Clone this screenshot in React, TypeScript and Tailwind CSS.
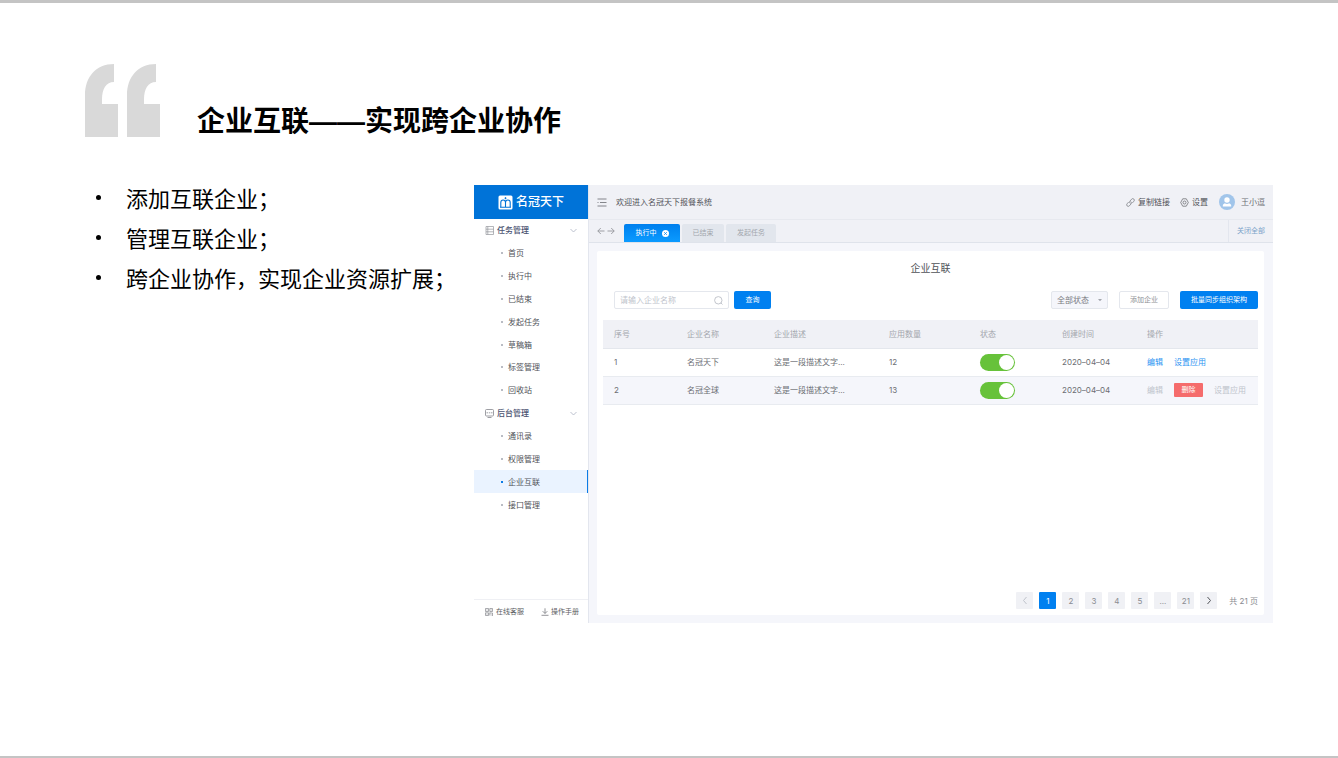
import type { ReactNode } from "react"

type NavItem = {
  label: string
  group?: "task" | "admin"
  active?: boolean
}

type Company = {
  id: number
  name: string
  desc: string
  apps: number
  created: string
  deletable?: boolean
}

const points = ["添加互联企业；", "管理互联企业；", "跨企业协作，实现企业资源扩展；"]

const navItems: NavItem[] = [
  { label: "任务管理", group: "task" },
  { label: "首页" },
  { label: "执行中" },
  { label: "已结束" },
  { label: "发起任务" },
  { label: "草稿箱" },
  { label: "标签管理" },
  { label: "回收站" },
  { label: "后台管理", group: "admin" },
  { label: "通讯录" },
  { label: "权限管理" },
  { label: "企业互联", active: true },
  { label: "接口管理" },
]

const companies: Company[] = [
  { id: 1, name: "名冠天下", desc: "这是一段描述文字...", apps: 12, created: "2020–04–04" },
  { id: 2, name: "名冠全球", desc: "这是一段描述文字...", apps: 13, created: "2020–04–04", deletable: true },
]

const columns = [
  { label: "序号", width: "w-[73px]" },
  { label: "企业名称", width: "w-[87px]" },
  { label: "企业描述", width: "w-[115px]" },
  { label: "应用数量", width: "w-[91px]" },
  { label: "状态", width: "w-[82px]" },
  { label: "创建时间", width: "w-[85px]" },
  { label: "操作", width: "w-[122px]" },
]

const pages = ["1", "2", "3", "4", "5", "...", "21"]

export default function App() {
  return (
    <div className="flex min-h-screen flex-col border-t-3 border-b-2 border-[#c4c4c4] bg-white text-black">
      <header className="flex items-start gap-[37px] pt-[61px] pl-[85px]">
        <QuoteMark />
        <h1 className="pt-[38px] font-['Liberation_Sans','Noto_Sans_CJK_SC',sans-serif] text-[28px] leading-10 font-bold">
          企业互联——实现跨企业协作
        </h1>
      </header>

      <main className="flex items-start pt-[35px] pr-[65px] pl-[96px]">
        <ul className="w-[378px] shrink-0 font-['Noto_Sans_CJK_SC',sans-serif] text-[22px] leading-10 whitespace-nowrap">
          {points.map((point) => (
            <li key={point} className="flex items-center gap-[25px]">
              <span className="size-[5px] rounded-full bg-black" />
              {point}
            </li>
          ))}
        </ul>
        <AdminWindow />
      </main>
    </div>
  )
}

function AdminWindow() {
  return (
    <section className="mt-[8px] flex min-h-[438px] min-w-0 flex-1 bg-[#f5f6fb] font-['Inter','Noto_Sans_CJK_SC',sans-serif] text-[8px] leading-3 text-[#6c6e73]">
      <Sidebar />
      <div className="flex min-w-0 flex-1 flex-col">
        <TopBar />
        <TabBar />
        <div className="flex flex-1 flex-col p-2 pr-[9px]">
          <CompanyPanel />
        </div>
      </div>
    </section>
  )
}

function Sidebar() {
  return (
    <aside className="flex w-[115px] shrink-0 flex-col border-r border-[#e3e6ee] bg-white">
      <div className="flex h-[34px] items-center justify-center gap-[3px] bg-[#0073d8] text-white">
        <LogoIcon />
        <span className="text-[12px] leading-4 font-medium">名冠天下</span>
      </div>
      <nav className="grid h-[297px] auto-rows-fr">
        {navItems.map((item) =>
          item.group ? (
            <button key={item.label} type="button" className="flex items-center gap-[3px] pr-[11px] pl-[11px] font-medium text-[#4a5270]">
              {item.group === "task" ? <ListIcon /> : <MonitorIcon />}
              <span className="flex-1 text-left">{item.label}</span>
              <ChevronIcon />
            </button>
          ) : (
            <a
              key={item.label}
              href="#"
              className={`flex items-center gap-[5px] pl-[27px] text-[#505258] ${item.active ? "border-r border-[#0b7be6] bg-[#eaf3ff]" : ""}`}
            >
              <span className={`size-[2px] ${item.active ? "bg-[#0b7be6]" : "bg-[#b9bcc4]"}`} />
              {item.label}
            </a>
          ),
        )}
      </nav>
      <div className="mt-auto flex h-6 items-center justify-between border-t border-[#eff0f4] pr-[9px] pl-[11px] text-[7px] text-[#5c5e63]">
        <a href="#" className="flex items-center gap-[3px]">
          <QrIcon />
          在线客服
        </a>
        <a href="#" className="flex items-center gap-[2px]">
          <DownloadIcon />
          操作手册
        </a>
      </div>
    </aside>
  )
}

function TopBar() {
  return (
    <div className="flex h-[35px] items-center border-b border-[#e7e9ef] bg-[#f0f1f6] pr-2 pl-2 text-[#505258]">
      <MenuIcon />
      <span className="ml-[9px] flex-1">欢迎进入名冠天下报餐系统</span>
      <button type="button" className="mr-[10px] flex items-center gap-[3px]">
        <LinkIcon />
        复制链接
      </button>
      <button type="button" className="mr-[11px] flex items-center gap-[3px]">
        <GearIcon />
        设置
      </button>
      <AvatarIcon />
      <span className="ml-[6px] text-[#6c6e73]">王小逗</span>
    </div>
  )
}

function TabBar() {
  return (
    <div className="flex h-[23px] items-stretch border-b border-[#dfe3eb] bg-[#f0f1f6] pl-2 text-[7px]">
      <ArrowsIcon />
      <div className="ml-[9px] flex flex-1 items-end gap-[2px]">
        <button
          type="button"
          className="flex h-[18px] w-14 items-center justify-center gap-[5px] rounded-t-[2px] bg-linear-to-b from-[#0080ee] to-[#0c9bff] text-white"
        >
          执行中
          <CloseIcon />
        </button>
        <button type="button" className="h-[18px] w-[42px] rounded-t-[2px] bg-[#e2e6ed] text-[#a3a6ad]">
          已结束
        </button>
        <button type="button" className="h-[18px] w-[50px] rounded-t-[2px] bg-[#e2e6ed] text-[#a3a6ad]">
          发起任务
        </button>
      </div>
      <button type="button" className="border-l border-[#e3e6ee] pr-2 pl-2 text-[#7ba3c9]">
        关闭全部
      </button>
    </div>
  )
}

function CompanyPanel() {
  return (
    <div className="flex flex-1 flex-col rounded-[2px] bg-white px-[6px] pb-[6px]">
      <h2 className="pt-[9px] text-center text-[10px] leading-4 text-[#505258]">企业互联</h2>
      <div className="mt-[15px] mb-[11px] flex h-[18px] items-stretch pl-[11px]">
        <label className="flex w-[115px] items-center rounded-[2px] border border-[#e4e7ed] pr-[5px] pl-[5px]">
          <input
            type="text"
            aria-label="企业名称"
            placeholder="请输入企业名称"
            className="min-w-0 flex-1 outline-none placeholder:text-[#c0c4cc]"
          />
          <SearchIcon />
        </label>
        <button type="button" className="ml-[5px] w-[37px] rounded-[2px] bg-[#0080f0] text-[7px] text-white">
          查询
        </button>
        <div className="relative mr-[11px] ml-auto flex">
          <select
            aria-label="状态"
            className="w-[57px] appearance-none rounded-[2px] border border-[#e4e7ed] bg-[#f5f6fb] pl-[5px] text-[#7a7c82]"
          >
            <option>全部状态</option>
          </select>
          <span className="pointer-events-none absolute top-1/2 right-[6px] -translate-y-1/2">
            <CaretIcon />
          </span>
        </div>
        <button type="button" className="mr-[11px] w-[50px] rounded-[2px] border border-[#e4e7ed] text-[7px] text-[#8f9196]">
          添加企业
        </button>
        <button type="button" className="w-[78px] rounded-[2px] bg-[#0080f0] text-[7px] text-white">
          批量同步组织架构
        </button>
      </div>

      <table className="w-full table-fixed text-left">
        <thead>
          <tr className="h-7 border-b border-[#e4e7ed] bg-[#f0f1f6] text-[#a3a6ad]">
            {columns.map((column) => (
              <th key={column.label} className={`${column.width} pl-[11px] font-normal`}>
                {column.label}
              </th>
            ))}
          </tr>
        </thead>
        <tbody>
          {companies.map((company) => (
            <tr key={company.id} className="h-7 border-b border-[#e8ebf0] even:bg-[#f5f6fb]">
              <td className="pl-[11px]">{company.id}</td>
              <td className="pl-[11px]">{company.name}</td>
              <td className="pl-[11px]">{company.desc}</td>
              <td className="pl-[11px]">{company.apps}</td>
              <td className="pl-[11px]">
                <Toggle label={`${company.name}状态`} />
              </td>
              <td className="pl-[11px]">{company.created}</td>
              <td className="pl-[11px]">
                <div className={`flex items-center gap-[11px] ${company.deletable ? "text-[#c0c4cc]" : "text-[#2c93f2]"}`}>
                  <button type="button">编辑</button>
                  {company.deletable && (
                    <button type="button" className="h-[14px] w-[29px] rounded-[1px] bg-[#f56c6c] text-[7px] text-white">
                      删除
                    </button>
                  )}
                  <button type="button">设置应用</button>
                </div>
              </td>
            </tr>
          ))}
        </tbody>
      </table>

      <div className="mt-auto flex items-center justify-end gap-[6px] text-[#8a8c91]">
        <PageButton label="上一页">
          <PageArrow className="text-[#c0c4cc]" d="M5.5 1 2.5 4.5 5.5 8" />
        </PageButton>
        {pages.map((page) => (
          <PageButton key={page} active={page === "1"}>
            {page}
          </PageButton>
        ))}
        <PageButton label="下一页">
          <PageArrow className="text-[#55575c]" d="M2.5 1 5.5 4.5 2.5 8" />
        </PageButton>
        <span className="ml-[6px]">共 21 页</span>
      </div>
    </div>
  )
}

function Toggle({ label }: { label: string }) {
  return (
    <label className="flex h-[17px] w-[35px] items-center rounded-full bg-[#67c23a] px-[1px]">
      <input
        type="checkbox"
        defaultChecked
        aria-label={label}
        className="size-[15px] appearance-none rounded-full bg-white checked:ml-auto"
      />
    </label>
  )
}

function PageButton({ children, active, label }: { children: ReactNode; active?: boolean; label?: string }) {
  return (
    <button
      type="button"
      aria-label={label}
      className={`flex size-[17px] items-center justify-center rounded-[1px] ${active ? "bg-[#0080f0] text-white" : "bg-[#f0f1f5]"}`}
    >
      {children}
    </button>
  )
}

function PageArrow({ d, className }: { d: string; className: string }) {
  return (
    <svg width="8" height="9" viewBox="0 0 8 9" fill="none" stroke="currentColor" className={className}>
      <path d={d} />
    </svg>
  )
}

function QuoteMark() {
  return (
    <svg width="75" height="73" viewBox="0 0 75 73" fill="#d9d9d9" className="shrink-0">
      <path d="M29 0v18C21 18 17 25 17 35v5h16v33H0V31C0 13 11 0 29 0z" />
      <path d="M71 0v18C63 18 59 25 59 35v5h16v33H42V31C42 13 53 0 71 0z" />
    </svg>
  )
}

// crown inside a rounded tile
function LogoIcon() {
  return (
    <svg width="15" height="15" viewBox="0 0 15 15" fill="none">
      <rect x="0.5" y="0.5" width="14" height="14" rx="1.5" fill="#fff" />
      <path
        d="M2.800 12V7.500q0-2.500 2.300-2.500 2.400 0 2.400 2.500V12M7.500 7.500q0-2.500 2.400-2.500 2.300 0 2.300 2.500V12M2 12.200h11"
        stroke="#0073d8"
        strokeWidth="1.100"
      />
      <path d="M7.500 2.200v2M6.500 3.200h2" stroke="#0073d8" strokeWidth="0.900" />
    </svg>
  )
}

function ListIcon() {
  return (
    <svg width="9" height="9" viewBox="0 0 9 9" fill="none" stroke="#94969c" strokeWidth="0.700">
      <path d="M1 .5h7.500v8H1zM1 3.200h7.500M1 5.800h7.500M2.800.5v8" />
    </svg>
  )
}

function MonitorIcon() {
  return (
    <svg width="9" height="9" viewBox="0 0 9 9" fill="none" stroke="#85878d" strokeWidth="0.800">
      <rect x="0.500" y="0.500" width="8" height="6.500" rx="1" />
      <path d="M1.500 3.800h1.500M3.800 3.800h1.500M6 3.800h1.500M2.500 8.500h4" />
    </svg>
  )
}

function ChevronIcon() {
  return (
    <svg width="7" height="5" viewBox="0 0 7 5" fill="none" stroke="#b4bac8" strokeWidth="0.900">
      <path d="m.5 1 3 3 3-3" />
    </svg>
  )
}

function QrIcon() {
  return (
    <svg width="8" height="8" viewBox="0 0 8 8" fill="none" stroke="#85878d" strokeWidth="0.700">
      <path d="M.5.5h3v3h-3zM4.800.5h2.700v3H4.800zM.5 4.800h3v2.700h-3zM4.800 4.500v3M4.800 5h2.700M7.500 5v3M6.200 6.500v1M1.500 2h1M5.700 2h1M1.500 6.200h1" />
    </svg>
  )
}

function DownloadIcon() {
  return (
    <svg width="8" height="8" viewBox="0 0 8 8" fill="none" stroke="#77797f" strokeWidth="0.800">
      <path d="M4 .3v5M1.700 3.200 4 5.500l2.300-2.300M.5 7.300h7" />
    </svg>
  )
}

function MenuIcon() {
  return (
    <svg width="10" height="9" viewBox="0 0 10 9" fill="none" stroke="#77797f" strokeWidth="0.900">
      <path d="M.5 1h9M3 4.500h6.500M.5 8h9M.5 4.500h1" />
    </svg>
  )
}

function LinkIcon() {
  return (
    <svg width="9" height="9" viewBox="0 0 9 9" fill="none" stroke="#707278" strokeWidth="0.700" strokeLinecap="round">
      <path d="M4 5.200a1.600 1.600 0 0 1 0-2.200l1.700-1.900a1.500 1.500 0 0 1 2.200 2.100L6.600 4.700" />
      <path d="M5 3.800a1.600 1.600 0 0 1 0 2.200L3.300 7.900a1.500 1.500 0 0 1-2.200-2.100l1.300-1.500" />
    </svg>
  )
}

function GearIcon() {
  return (
    <svg width="9" height="9" viewBox="0 0 9 9" fill="none" stroke="#606266" strokeWidth="0.700">
      <path d="M2.700.8h3.600l2 3.700-2 3.700H2.700l-2-3.700z" strokeLinejoin="round" />
      <circle cx="4.500" cy="4.500" r="1.500" />
    </svg>
  )
}

function AvatarIcon() {
  return (
    <svg width="16" height="16" viewBox="0 0 16 16">
      <circle cx="8" cy="8" r="8" fill="#a1c5ea" />
      <circle cx="8" cy="6" r="2.700" fill="#fff" />
      <path d="M3.800 12.500V11.500q0-1.500 2-2.200 2.200 1.200 4.400 0 2 .7 2 2.200v1z" fill="#fff" />
    </svg>
  )
}

function ArrowsIcon() {
  return (
    <svg width="18" height="22" viewBox="0 0 18 22" fill="none" stroke="#94969c" strokeWidth="0.900">
      <path d="M7.500 11H.8M3.800 8l-3 3 3 3M10.500 11h6.700M14.200 8l3 3-3 3" />
    </svg>
  )
}

function CloseIcon() {
  return (
    <svg width="7" height="7" viewBox="0 0 7 7">
      <circle cx="3.500" cy="3.500" r="3.500" fill="#fff" />
      <path d="m2.200 2.200 2.600 2.600M4.800 2.200 2.200 4.800" stroke="#0a8cf7" strokeWidth="0.900" />
    </svg>
  )
}

function SearchIcon() {
  return (
    <svg width="9" height="9" viewBox="0 0 9 9" fill="none" stroke="#b4b8c0" strokeWidth="0.800">
      <circle cx="4.300" cy="4.300" r="3.700" />
      <path d="m6.800 6.800 1.700 1.700" />
    </svg>
  )
}

function CaretIcon() {
  return (
    <svg width="4" height="3" viewBox="0 0 4 3" fill="#a3a6ad" className="block">
      <path d="M0 .5h4L2 2.800z" />
    </svg>
  )
}
